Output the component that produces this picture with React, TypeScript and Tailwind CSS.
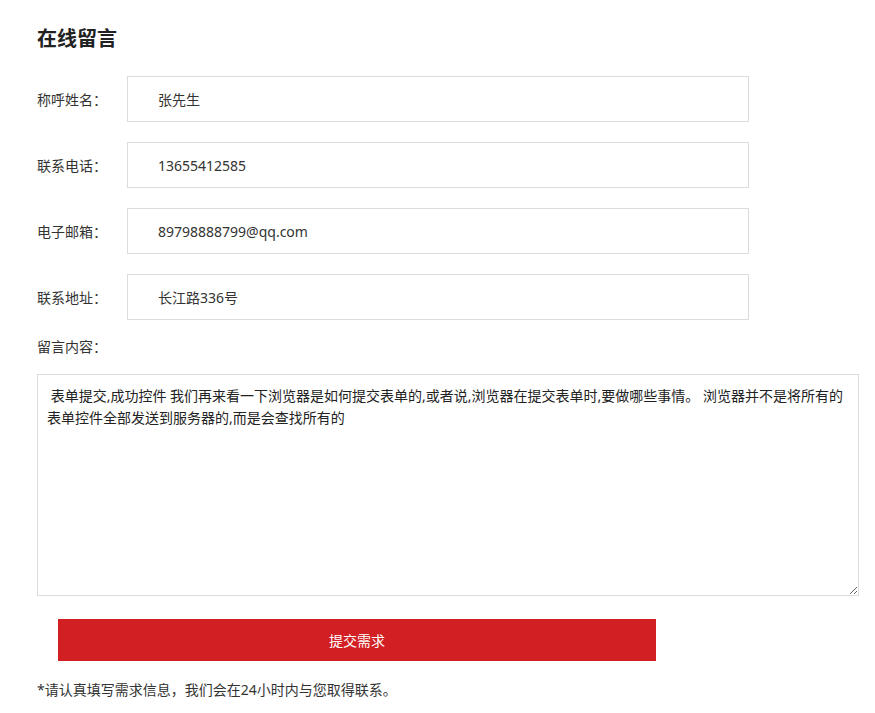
const fields = [
  { label: "称呼姓名：", value: "张先生" },
  { label: "联系电话：", value: "13655412585" },
  { label: "电子邮箱：", value: "89798888799@qq.com" },
  { label: "联系地址：", value: "长江路336号" },
];

const font = {
  fontFamily: '"Microsoft YaHei", "Noto Sans", "Noto Sans CJK SC", sans-serif',
};

export default function App() {
  return (
    <div className="bg-white min-h-screen pl-[37px] pr-4 pt-[25px] text-[#333]" style={font}>
      <h2 className="text-[20px] font-bold leading-[28px] text-[#222]">在线留言</h2>

      <form className="mt-[23px]">
        {/* Basic fields */}
        <div className="flex flex-col gap-5">
          {fields.map((f) => (
            <div key={f.label} className="flex items-center">
              <label className="w-[90px] text-[14px]">{f.label}</label>
              <input
                defaultValue={f.value}
                className="w-[622px] h-[46px] border border-[#dcdcdc] pl-[30px] text-[14px] text-[#333] outline-none"
              />
            </div>
          ))}
        </div>

        {/* Message */}
        <label className="block mt-[18px] text-[14px] leading-[18px]">留言内容：</label>
        <textarea
          defaultValue=" 表单提交,成功控件 我们再来看一下浏览器是如何提交表单的,或者说,浏览器在提交表单时,要做哪些事情。 浏览器并不是将所有的表单控件全部发送到服务器的,而是会查找所有的"
          className="block mt-[18px] w-[822px] h-[222px] border border-[#dcdcdc] px-[9px] py-[10px] text-[14px] leading-[22px] text-[#222] outline-none"
        />

        <button
          type="button"
          className="block ml-[21px] mt-[23px] w-[598px] h-[42px] bg-[#d21f24] text-white text-[14px]"
        >
          提交需求
        </button>

        <p className="mt-[20px] text-[14px] leading-[18px]">
          *请认真填写需求信息，我们会在24小时内与您取得联系。
        </p>
      </form>
    </div>
  );
}
